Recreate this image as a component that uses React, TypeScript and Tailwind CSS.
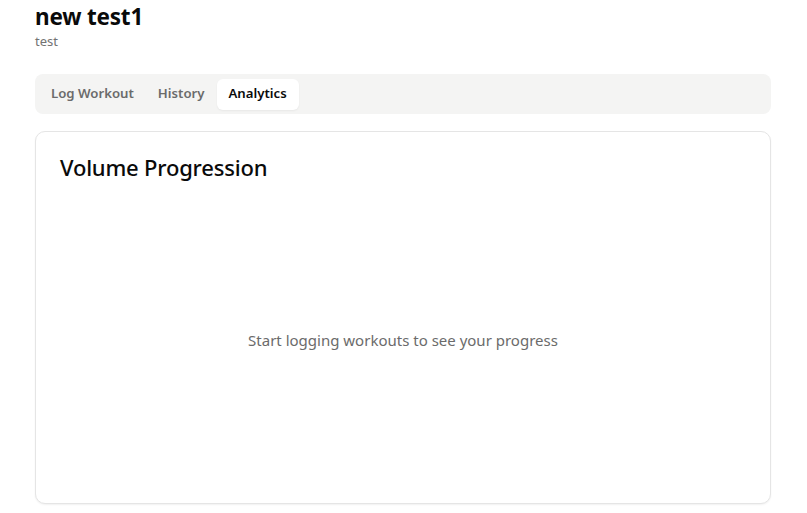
import { useState } from "react";

const tabs = ["Log Workout", "History", "Analytics"];

const App = () => {
  const [active, setActive] = useState("Analytics");

  return (
    <div className="min-h-screen bg-white font-['Noto_Sans',sans-serif] text-[#0a0a0a]">
      <div className="pl-[35px] pr-[36px]">
        {/* Header */}
        <div className="pt-[2px]">
          <h1 className="text-[22.5px] font-bold leading-[30px] tracking-[-0.2px]">new test1</h1>
          <p className="text-[13px] leading-[18px] text-[#737373]">test</p>
        </div>

        {/* Tabs */}
        <div className="mt-[24px] flex h-[40px] items-center rounded-lg bg-[#f4f4f3] p-1">
          {tabs.map((tab) => (
            <button
              key={tab}
              onClick={() => setActive(tab)}
              className={
                tab === active
                  ? "h-[31px] rounded-md bg-white px-3 text-[13.2px] font-semibold text-[#0a0a0a] shadow-[0_1px_2px_rgba(0,0,0,0.05)]"
                  : "h-[31px] rounded-md px-3 text-[13.2px] font-semibold text-[#6b6b6b]"
              }
            >
              {tab}
            </button>
          ))}
        </div>

        {/* Card */}
        <div className="mt-[17px] h-[373px] rounded-[10px] border border-[#e5e5e5] bg-white shadow-[0_1px_2px_rgba(0,0,0,0.06)]">
          <div className="p-6">
            <h2 className="text-[22px] font-medium leading-none tracking-[-0.2px]">Volume Progression</h2>
          </div>
          <div className="flex h-[276px] items-center justify-center px-6">
            <p className="text-[15px] text-[#6b6b6b]">Start logging workouts to see your progress</p>
          </div>
        </div>
      </div>
    </div>
  );
};

export default App;
